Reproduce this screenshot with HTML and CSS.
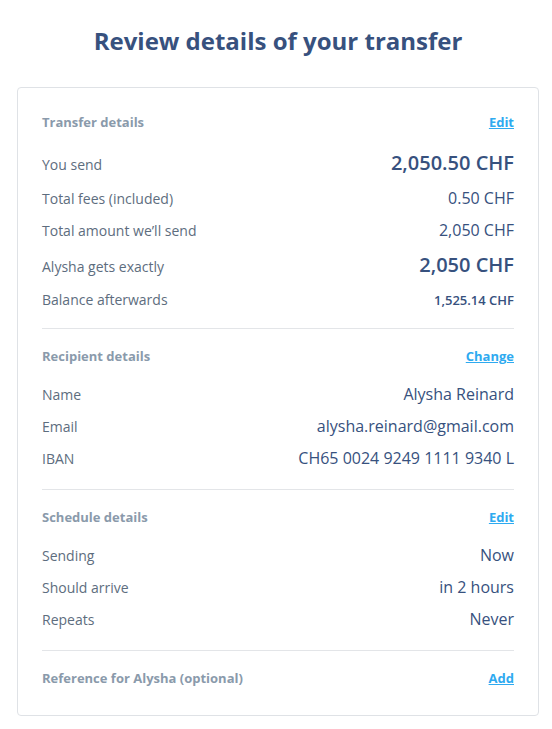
FILE: index.html
```html
<!DOCTYPE html>
<html lang="en">
<head>
<meta charset="utf-8">
<title>Review details of your transfer</title>
<link rel="stylesheet" href="styles.css">
</head>
<body>
<div class="page">
  <h1 class="title">Review details of your transfer</h1>
  <div class="card">
    <section class="section">
      <div class="section-head">
        <span class="section-title">Transfer details</span>
        <a class="link" href="#">Edit</a>
      </div>
      <div class="rows">
        <div class="row row-big"><span class="label">You send</span><span class="value value-big">2,050.50 CHF</span></div>
        <div class="row"><span class="label">Total fees (included)</span><span class="value">0.50 CHF</span></div>
        <div class="row"><span class="label">Total amount we’ll send</span><span class="value">2,050 CHF</span></div>
        <div class="row row-big"><span class="label">Alysha gets exactly</span><span class="value value-big">2,050 CHF</span></div>
        <div class="row row-last"><span class="label">Balance afterwards</span><span class="value value-small">1,525.14 CHF</span></div>
      </div>
    </section>
    <section class="section">
      <div class="section-head">
        <span class="section-title">Recipient details</span>
        <a class="link" href="#">Change</a>
      </div>
      <div class="rows">
        <div class="row"><span class="label">Name</span><span class="value">Alysha Reinard</span></div>
        <div class="row"><span class="label">Email</span><span class="value">alysha.reinard@gmail.com</span></div>
        <div class="row"><span class="label">IBAN</span><span class="value">CH65 0024 9249 1111 9340 L</span></div>
      </div>
    </section>
    <section class="section">
      <div class="section-head">
        <span class="section-title">Schedule details</span>
        <a class="link" href="#">Edit</a>
      </div>
      <div class="rows">
        <div class="row"><span class="label">Sending</span><span class="value">Now</span></div>
        <div class="row"><span class="label">Should arrive</span><span class="value">in 2 hours</span></div>
        <div class="row"><span class="label">Repeats</span><span class="value">Never</span></div>
      </div>
    </section>
    <section class="section section-last">
      <div class="section-head">
        <span class="section-title">Reference for Alysha (optional)</span>
        <a class="link" href="#">Add</a>
      </div>
    </section>
  </div>
</div>
</body>
</html>
```

FILE: styles.css
```css
* { box-sizing: border-box; }
html, body { margin: 0; padding: 0; background: #ffffff; }
body {
  font-family: "Open Sans", "Liberation Sans", sans-serif;
  color: #37517e;
}
.page {
  width: 522px;
  margin-left: 17px;
  padding-top: 25px;
}
.title {
  margin: 0;
  text-align: center;
  font-size: 24px;
  line-height: 32px;
  font-weight: 700;
  color: #37517e;
}
.card {
  margin-top: 30px;
  border: 1px solid #dfe2e6;
  border-radius: 4px;
  padding: 7px 24px 0;
}
.section {
  padding: 17px 0 10px;
  border-bottom: 1px solid #e3e5e8;
}
.section-last {
  border-bottom: none;
  padding-bottom: 27px;
}
.section-head {
  display: flex;
  justify-content: space-between;
  align-items: baseline;
  height: 20px;
  line-height: 20px;
}
.section-title {
  font-size: 13px;
  font-weight: 700;
  color: #8a9aab;
}
.link {
  font-size: 13px;
  font-weight: 700;
  color: #2eaaf0;
  text-decoration: underline;
}
.rows {
  margin-top: 17px;
  display: flex;
  flex-direction: column;
}
.row {
  display: flex;
  justify-content: space-between;
  align-items: baseline;
  height: 32px;
  line-height: 22px;
}
.row-big { height: 38px; }
.row-last { height: 29px; }
.label {
  font-size: 14px;
  color: #5d6d7e;
}
.value {
  font-size: 16px;
  color: #37517e;
}
.value-big {
  font-size: 20px;
  line-height: 28px;
  font-weight: 600;
}
.value-small {
  font-size: 13px;
  font-weight: 600;
}
```
